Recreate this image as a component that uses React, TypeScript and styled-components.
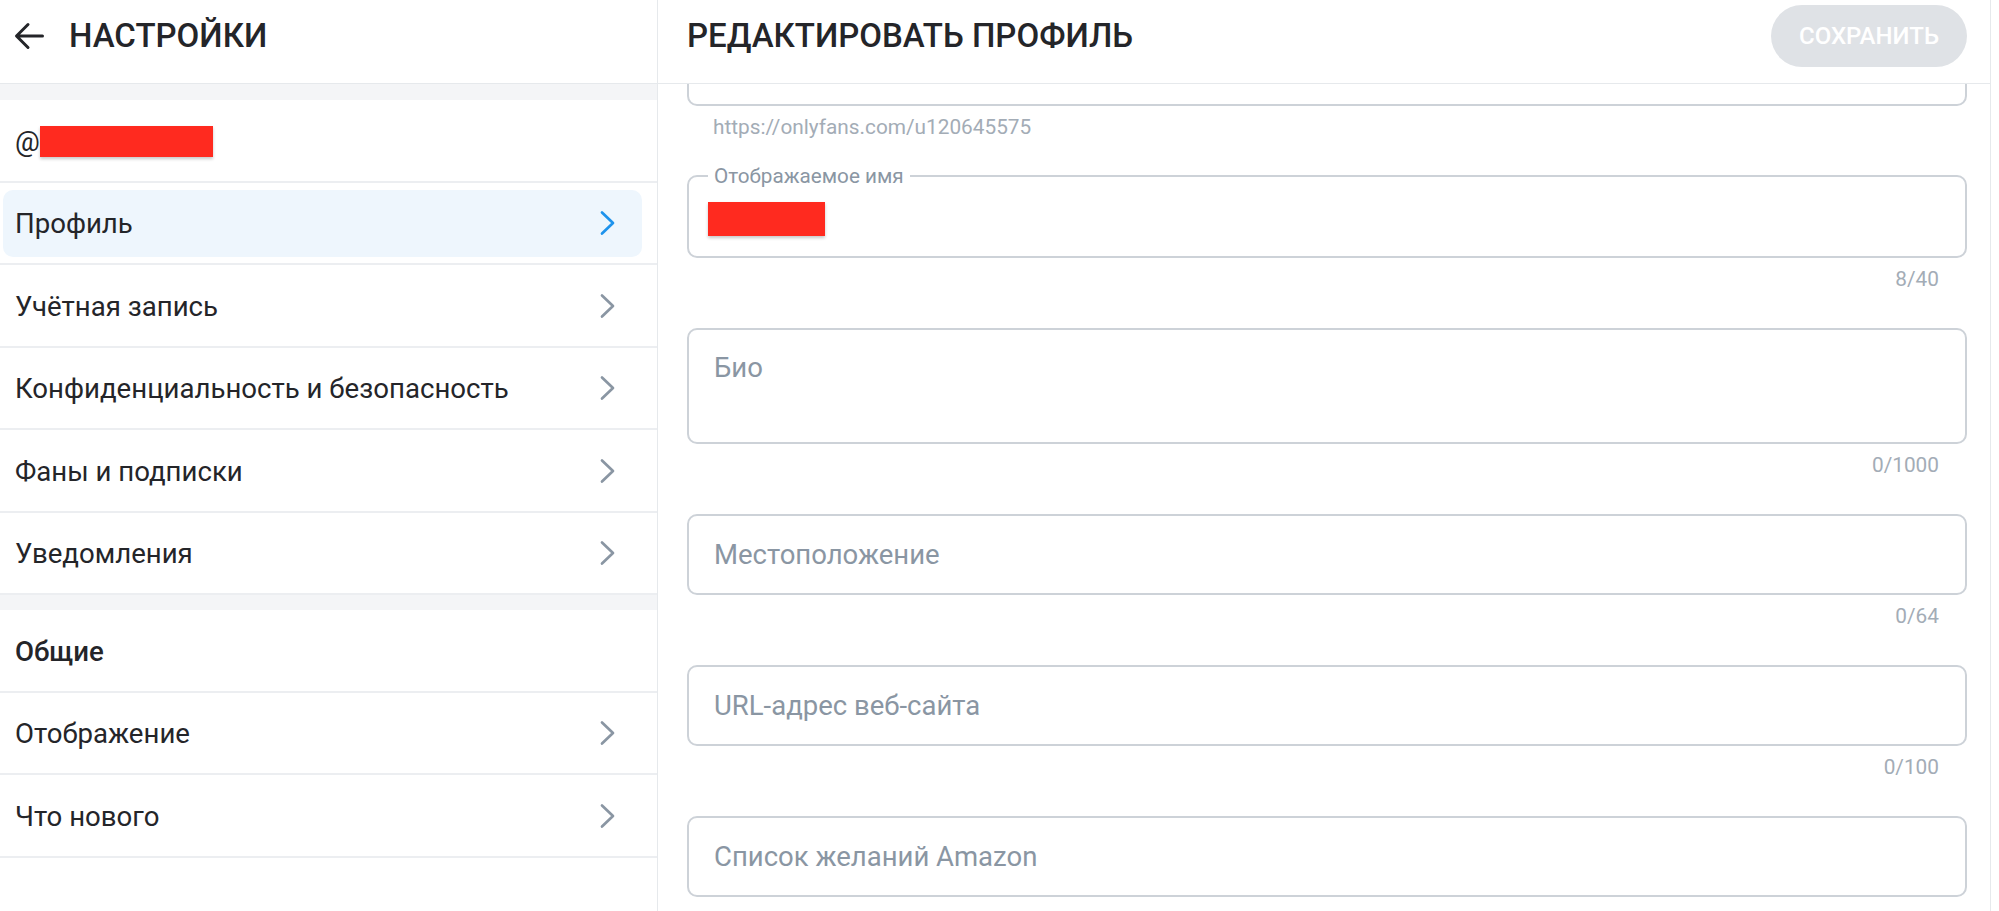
import React from "react";
import styled, { createGlobalStyle } from "styled-components";

const GlobalStyle = createGlobalStyle`
  html, body { margin: 0; padding: 0; background: #ffffff; }
  body {
    font-family: Roboto, "Noto Sans", "Liberation Sans", sans-serif;
    color: #242529;
    -webkit-font-smoothing: antialiased;
  }
  *, *::before, *::after { box-sizing: border-box; }
`;

const Page = styled.div`
  display: flex;
  width: 1999px;
  height: 911px;
  overflow: hidden;
  background: #ffffff;
`;

const Sidebar = styled.aside`
  width: 658px;
  flex: none;
  display: flex;
  flex-direction: column;
  border-right: 1px solid #e6e9ec;
`;

const Header = styled.header<{ $pad?: string }>`
  height: 84px;
  flex: none;
  display: flex;
  align-items: flex-start;
  justify-content: space-between;
  padding: ${(p) => p.$pad || "5px 0 0 0"};
  border-bottom: 1px solid #e6e9ec;
`;

const HeaderLeft = styled.div`
  display: flex;
  align-items: center;
  height: 62px;
`;

const BackButton = styled.button`
  width: 30px;
  height: 62px;
  margin-right: 25px;
  padding: 0;
  border: none;
  background: none;
  color: #242529;
  display: flex;
  align-items: center;
  justify-content: center;
`;

const Title = styled.h1`
  margin: 0;
  font-size: 33px;
  line-height: 62px;
  font-weight: 500;
  color: #242529;
  text-transform: uppercase;
  white-space: nowrap;
`;

const Band = styled.div<{ $h: number }>`
  height: ${(p) => p.$h}px;
  flex: none;
  background: #f4f5f7;
`;

const Row = styled.div`
  height: 82.5px;
  flex: none;
  display: flex;
  padding: 7px 15px 6px 3px;
  border-bottom: 2px solid #eceef1;
`;

const RowInner = styled.div<{ $active?: boolean }>`
  flex: 1;
  display: flex;
  align-items: center;
  justify-content: space-between;
  padding: 2px 26px 0 12px;
  border-radius: 10px;
  background: ${(p) => (p.$active ? "#eef6fd" : "transparent")};
`;

const RowLabel = styled.span<{ $bold?: boolean }>`
  font-size: 27.6px;
  line-height: 32px;
  font-weight: ${(p) => (p.$bold ? 500 : 400)};
  color: #242529;
  display: flex;
  align-items: center;
`;

const Chevron = styled.span<{ $active?: boolean }>`
  display: flex;
  margin-top: -2px;
  color: ${(p) => (p.$active ? "#1e93ec" : "#8a96a3")};
`;

const Redact = styled.span<{ $w: number; $h: number }>`
  display: inline-block;
  width: ${(p) => p.$w}px;
  height: ${(p) => p.$h}px;
  background: #ff2a1f;
  box-shadow: 0 2px 3px rgba(0, 0, 0, 0.22);
`;

const Main = styled.main`
  width: 1333px;
  flex: none;
  display: flex;
  flex-direction: column;
  border-right: 1px solid #e6e9ec;
`;

const SaveButton = styled.button`
  height: 62px;
  padding: 0 28px;
  border: none;
  border-radius: 31px;
  background: #dfe2e6;
  color: #ffffff;
  font-family: inherit;
  font-size: 24px;
  font-weight: 500;
  text-transform: uppercase;
`;

const Scroll = styled.div`
  flex: 1;
  overflow: hidden;
  padding: 0 23px 0 29px;
`;

const Form = styled.div`
  display: flex;
  flex-direction: column;
  gap: 37px;
  margin-top: -59px;
`;

const Group = styled.div`
  display: flex;
  flex-direction: column;
`;

const Input = styled.input`
  height: 81px;
  width: 100%;
  border: 2px solid #cdd2d8;
  border-radius: 10px;
  padding: 0 25px;
  font-family: inherit;
  font-size: 27.5px;
  color: #242529;
  background: #fff;
  outline: none;
  &::placeholder { color: #8a96a3; opacity: 1; }
`;

const TextArea = styled.textarea`
  height: 116px;
  width: 100%;
  border: 2px solid #cdd2d8;
  border-radius: 10px;
  padding: 22px 25px 0;
  font-family: inherit;
  font-size: 27.5px;
  line-height: 32px;
  color: #242529;
  background: #fff;
  resize: none;
  outline: none;
  &::placeholder { color: #8a96a3; opacity: 1; }
`;

const Outlined = styled.fieldset`
  margin: -12px 0 0;
  padding: 14px 20px 20px 19px;
  border: 2px solid #cdd2d8;
  border-radius: 10px;
  min-width: 0;
`;

const Legend = styled.legend`
  padding: 0 6px;
  font-size: 20.7px;
  line-height: 24px;
  color: #8a96a3;
`;

const ValueLine = styled.div`
  height: 34px;
  display: flex;
  align-items: center;
`;

const Helper = styled.div<{ $align: "left" | "right" }>`
  margin-top: 9px;
  height: 24px;
  padding: 0 28px 0 26px;
  display: flex;
  justify-content: ${(p) => (p.$align === "left" ? "flex-start" : "flex-end")};
  font-size: 20.8px;
  line-height: 24px;
  color: #a3acb6;
`;

const ChevronIcon = () => (
  <svg width="18" height="26" viewBox="0 0 18 26" fill="none">
    <polyline
      points="4,2.5 15,13 4,23.5"
      stroke="currentColor"
      strokeWidth="2.7"
      strokeLinecap="round"
      strokeLinejoin="round"
    />
  </svg>
);

const BackIcon = () => (
  <svg width="30" height="28" viewBox="0 0 30 28" fill="none">
    <path
      d="M28.5 14H3M14 2.5L2.5 14L14 25.5"
      stroke="currentColor"
      strokeWidth="3"
      strokeLinecap="round"
      strokeLinejoin="round"
    />
  </svg>
);

type Item = { label: string; active?: boolean };

const accountItems: Item[] = [
  { label: "Профиль", active: true },
  { label: "Учётная запись" },
  { label: "Конфиденциальность и безопасность" },
  { label: "Фаны и подписки" },
  { label: "Уведомления" },
];

const generalItems: Item[] = [{ label: "Отображение" }, { label: "Что нового" }];

const NavRow = ({ label, active }: Item) => (
  <Row>
    <RowInner $active={active}>
      <RowLabel>{label}</RowLabel>
      <Chevron $active={active}>
        <ChevronIcon />
      </Chevron>
    </RowInner>
  </Row>
);

type Field = { placeholder: string; counter: string; tall?: boolean };

const fields: Field[] = [
  { placeholder: "Био", counter: "0/1000", tall: true },
  { placeholder: "Местоположение", counter: "0/64" },
  { placeholder: "URL-адрес веб-сайта", counter: "0/100" },
];

export default function App() {
  return (
    <>
      <GlobalStyle />
      <Page>
        <Sidebar>
          <Header $pad="5px 0 0 14px">
            <HeaderLeft>
              <BackButton aria-label="Назад">
                <BackIcon />
              </BackButton>
              <Title>Настройки</Title>
            </HeaderLeft>
          </Header>
          <Band $h={16} />
          <Row>
            <RowInner>
              <RowLabel>
                @<Redact $w={173} $h={31} />
              </RowLabel>
            </RowInner>
          </Row>
          {accountItems.map((it) => (
            <NavRow key={it.label} {...it} />
          ))}
          <Band $h={15} />
          <Row>
            <RowInner>
              <RowLabel $bold>Общие</RowLabel>
            </RowInner>
          </Row>
          {generalItems.map((it) => (
            <NavRow key={it.label} {...it} />
          ))}
        </Sidebar>
        <Main>
          <Header $pad="5px 23px 0 29px">
            <Title>Редактировать профиль</Title>
            <SaveButton disabled>Сохранить</SaveButton>
          </Header>
          <Scroll>
            <Form>
              <Group>
                <Input aria-label="Имя пользователя" />
                <Helper $align="left">https://onlyfans.com/u120645575</Helper>
              </Group>
              <Group>
                <Outlined>
                  <Legend>Отображаемое имя</Legend>
                  <ValueLine>
                    <Redact $w={117} $h={34} />
                  </ValueLine>
                </Outlined>
                <Helper $align="right">8/40</Helper>
              </Group>
              {fields.map((f) => (
                <Group key={f.placeholder}>
                  {f.tall ? (
                    <TextArea placeholder={f.placeholder} />
                  ) : (
                    <Input placeholder={f.placeholder} />
                  )}
                  <Helper $align="right">{f.counter}</Helper>
                </Group>
              ))}
              <Group>
                <Input placeholder="Список желаний Amazon" />
              </Group>
            </Form>
          </Scroll>
        </Main>
      </Page>
    </>
  );
}
